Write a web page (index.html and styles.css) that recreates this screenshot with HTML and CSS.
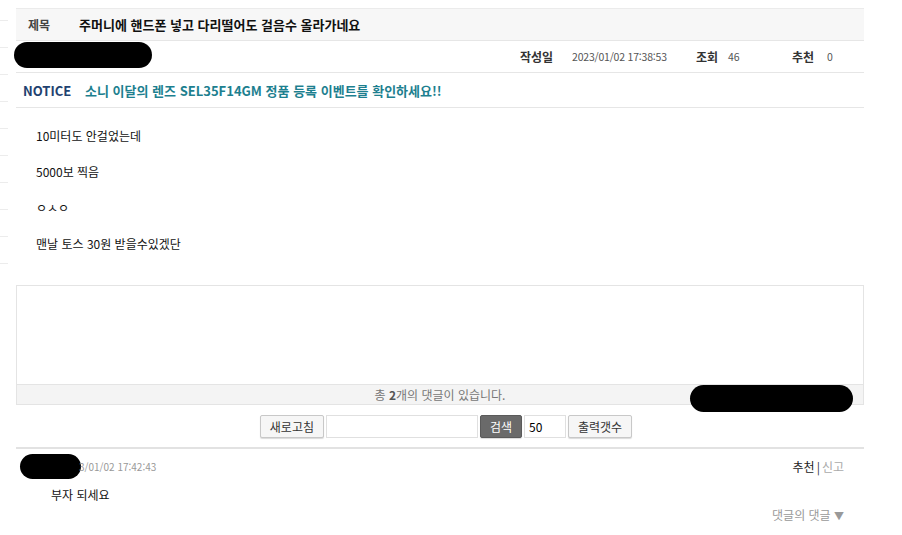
FILE: index.html
```html
<!DOCTYPE html>
<html lang="ko">
<head>
    <meta charset="UTF-8">
    <title>주머니에 핸드폰 넣고 다리떨어도 걸음수 올라가네요</title>
    <link rel="stylesheet" href="styles.css">
</head>
<body>

    <!-- left edge of the side list -->
    <div class="side">
        <span></span><span></span><span></span><span></span><span></span>
        <span></span><span></span><span></span><span></span><span></span>
    </div>

    <div class="board">

        <!-- Title -->
        <div class="title-row">
            <span class="label">제목</span>
            <h1>주머니에 핸드폰 넣고 다리떨어도 걸음수 올라가네요</h1>
        </div>

        <!-- Writer / meta -->
        <div class="meta-row">
            <span class="mask mask-writer"></span>
            <div class="meta">
                <b class="w52">작성일</b><span class="date">2023/01/02 17:38:53</span>
                <b class="w32">조회</b><span class="views">46</span>
                <b class="w35">추천</b><span>0</span>
            </div>
        </div>

        <!-- Notice -->
        <div class="notice-row">
            <span class="notice">NOTICE</span>
            <a href="#" class="notice-link">소니 이달의 렌즈 SEL35F14GM 정품 등록 이벤트를 확인하세요!!</a>
        </div>

        <!-- Content -->
        <div class="content">
            <p>10미터도 안걸었는데</p>
            <p>5000보 찍음</p>
            <p>ㅇㅅㅇ</p>
            <p>맨날 토스 30원 받을수있겠단</p>
        </div>

        <!-- Comment box -->
        <div class="comment-box">
            <div class="comment-input"></div>
            <div class="comment-count">총 <b>2</b>개의 댓글이 있습니다.</div>
            <span class="mask mask-count"></span>
        </div>

        <div class="tools">
            <button class="btn">새로고침</button>
            <input type="text" class="search">
            <button class="btn btn-dark">검색</button>
            <input type="text" class="count" value="50">
            <button class="btn">출력갯수</button>
        </div>

        <!-- Comment list -->
        <div class="comment">
            <div class="comment-head">
                <div class="who">
                    <span class="mask mask-nick"></span><span class="c-date">3/01/02 17:42:43</span>
                </div>
                <div class="actions"><span class="rec">추천</span><span class="bar">|</span>신고</div>
            </div>
            <p class="c-text">부자 되세요</p>
            <div class="reply">댓글의 댓글 <span class="arrow">▼</span></div>
        </div>

    </div>

</body>
</html>
```

FILE: styles.css
```css
/* Reset */
* {
    margin: 0;
    padding: 0;
    box-sizing: border-box;
}

body {
    font-family: "Noto Sans CJK KR", "DejaVu Sans", sans-serif;
    font-size: 12px;
    color: #222;
    background: #fff;
    display: flex;
    align-items: flex-start;
    padding-top: 8px;
}

/* Side remnant */
.side {
    width: 8px;
    display: flex;
    flex-direction: column;
}

    .side span {
        display: block;
        height: 27px;
        border-bottom: 1px solid #ececec;
    }

    .side span:first-child {
        height: 13px;
    }

.board {
    width: 848px;
    margin-left: 8px;
}

/* Title row */
.title-row {
    display: flex;
    align-items: center;
    height: 33px;
    background: #f7f7f7;
    border-top: 1px solid #ebebeb;
    border-bottom: 1px solid #e6e6e6;
}

    .title-row .label {
        width: 63px;
        padding-left: 12px;
        font-weight: bold;
        font-size: 12px;
        color: #444;
    }

    .title-row h1 {
        font-size: 13px;
        font-weight: bold;
        color: #111;
    }

/* Meta row */
.meta-row {
    display: flex;
    align-items: center;
    justify-content: space-between;
    height: 32px;
    border-bottom: 1px solid #e6e6e6;
}

.meta {
    display: flex;
    align-items: center;
    font-size: 10.5px;
    color: #555;
    width: 344px;
}

    .meta b {
        font-size: 12px;
        color: #333;
    }

    .meta .w52 {
        width: 52px;
    }

    .meta .w32 {
        width: 32px;
    }

    .meta .w35 {
        width: 35px;
    }

    .meta .date {
        width: 124px;
        letter-spacing: -0.2px;
    }

    .meta .views {
        width: 64px;
    }

/* Redaction blobs */
.mask {
    display: inline-block;
    background: #000;
    border-radius: 14px;
}

.mask-writer {
    width: 138px;
    height: 26px;
    margin-left: -2px;
    margin-top: -3px;
}

.mask-count {
    position: absolute;
    left: 673px;
    top: 99px;
    width: 163px;
    height: 27px;
}

.mask-nick {
    width: 61px;
    height: 25px;
}

/* Notice */
.notice-row {
    display: flex;
    align-items: center;
    height: 35px;
    border-bottom: 1px solid #e6e6e6;
    padding-left: 7px;
}

.notice {
    font-weight: bold;
    font-size: 13px;
    color: #1f4270;
    width: 62px;
}

.notice-link {
    font-weight: bold;
    font-size: 13px;
    color: #1d7f8f;
    text-decoration: none;
}

/* Content */
.content {
    padding: 20px 0 0 20px;
    height: 177px;
}

    .content p {
        font-size: 12px;
        line-height: 16px;
        margin-bottom: 20px;
        color: #111;
    }

/* Comment box */
.comment-box {
    position: relative;
    border: 1px solid #e4e4e4;
}

.comment-input {
    height: 98px;
    background: #fff;
}

.comment-count {
    height: 20px;
    line-height: 20px;
    background: #f4f4f4;
    border-top: 1px solid #e4e4e4;
    text-align: center;
    color: #777;
    font-size: 12px;
}

    .comment-count b {
        color: #555;
    }

/* Tools */
.tools {
    display: flex;
    justify-content: center;
    align-items: center;
    gap: 2px;
    height: 44px;
    border-bottom: 2px solid #e2e2e2;
    padding-left: 12px;
}

.btn {
    font-family: inherit;
    font-size: 12px;
    height: 23px;
    padding: 0 9px;
    background: #f6f6f6;
    border: 1px solid #c8c8c8;
    border-radius: 2px;
    box-shadow: 0 1px 1px rgba(0, 0, 0, 0.15);
    color: #333;
}

.btn-dark {
    background: #6a6a6a;
    border-color: #5a5a5a;
    color: #fff;
    width: 42px;
    padding: 0;
}

.tools input {
    height: 23px;
    border: 1px solid #e0e0e0;
    font-family: inherit;
    font-size: 12px;
    padding: 0 4px;
}

.search {
    width: 152px;
}

.count {
    width: 42px;
}

/* Comment list */
.comment {
    padding: 5px 20px 0 4px;
}

.comment-head {
    display: flex;
    justify-content: space-between;
    align-items: center;
}

.who {
    display: flex;
    align-items: center;
}

.c-date {
    font-size: 10px;
    color: #999;
    margin-left: -2px;
}

.actions {
    font-size: 12px;
    color: #aaa;
}

    .actions .rec {
        color: #222;
    }

    .actions .bar {
        color: #333;
        margin: 0 2px;
    }

.c-text {
    padding: 7px 0 0 31px;
    font-size: 12px;
    color: #111;
}

.reply {
    text-align: right;
    color: #999;
    font-size: 12px;
    margin-top: 3px;
}

    .reply .arrow {
        font-size: 10px;
    }
```
